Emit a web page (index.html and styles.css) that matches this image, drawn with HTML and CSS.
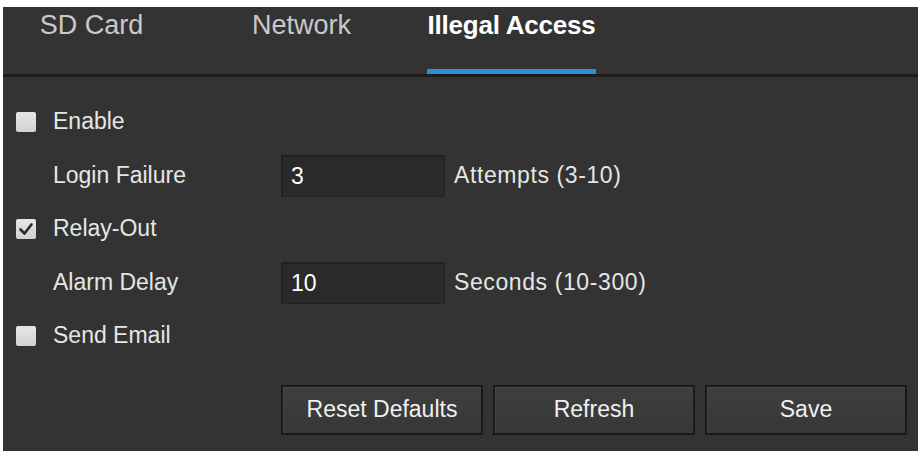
FILE: index.html
```html
<!DOCTYPE html>
<html>
<head>
<meta charset="utf-8">
<link rel="stylesheet" href="styles.css">
</head>
<body>
<div class="panel">
  <div class="tabs">
    <div class="tab"><span class="tab-label">SD Card</span></div>
    <div class="tab"><span class="tab-label">Network</span></div>
    <div class="tab active"><span class="tab-label">Illegal Access</span></div>
  </div>
  <div class="content">
    <div class="row">
      <span class="check"></span>
      <span class="label">Enable</span>
    </div>
    <div class="row indent">
      <span class="label field-label">Login Failure</span>
      <div class="input">3</div>
      <span class="suffix">Attempts (3-10)</span>
    </div>
    <div class="row">
      <span class="check checked">
        <svg viewBox="0 0 20 20" width="20" height="20"><path d="M4.5 10.5 L8.5 14.5 L15.5 5.5" fill="none" stroke="#2b2b2b" stroke-width="2.6" stroke-linecap="round" stroke-linejoin="round"/></svg>
      </span>
      <span class="label">Relay-Out</span>
    </div>
    <div class="row indent">
      <span class="label field-label">Alarm Delay</span>
      <div class="input">10</div>
      <span class="suffix">Seconds (10-300)</span>
    </div>
    <div class="row">
      <span class="check"></span>
      <span class="label">Send Email</span>
    </div>
    <div class="actions">
      <button class="btn">Reset Defaults</button>
      <button class="btn">Refresh</button>
      <button class="btn">Save</button>
    </div>
  </div>
</div>
</body>
</html>
```
FILE: styles.css
```css
html, body {
  margin: 0;
  padding: 0;
  background: #ffffff;
}
body {
  width: 923px;
  height: 457px;
  overflow: hidden;
  font-family: "Liberation Sans", Arial, sans-serif;
}
.panel {
  margin: 7px 5px 0 3px;
  height: 444px;
  background: #333333;
  display: flex;
  flex-direction: column;
}
.tabs {
  display: flex;
  gap: 33px;
  height: 67px;
  border-bottom: 3px solid #1d1d1d;
}
.tab {
  width: 177px;
  display: flex;
  justify-content: center;
}
.tab-label {
  box-sizing: border-box;
  height: 67px;
  padding-top: 3px;
  font-size: 27px;
  line-height: 30px;
  color: #c9c9c9;
}
.tab.active .tab-label {
  color: #ffffff;
  font-weight: bold;
  font-size: 26px;
  letter-spacing: -0.2px;
  border-bottom: 5px solid #2b8fd8;
}
.content {
  padding-top: 18px;
  display: flex;
  flex-direction: column;
}
.row {
  height: 53.5px;
  display: flex;
  align-items: center;
  padding-left: 13px;
}
.row.indent {
  padding-left: 50px;
}
.check {
  width: 20px;
  height: 20px;
  border-radius: 2px;
  background: linear-gradient(#e6e6e6, #d2d2d2);
  margin-right: 17px;
  display: flex;
}
.label {
  font-size: 23px;
  color: #e6e6e6;
}
.field-label {
  width: 228px;
}
.input {
  box-sizing: border-box;
  width: 164px;
  height: 42px;
  background: #2a2a2a;
  border: 1px solid #222222;
  box-shadow: inset 1px 1px 0 #1f1f1f;
  padding-left: 9px;
  display: flex;
  align-items: center;
  font-size: 23px;
  color: #ffffff;
  margin-top: 2px;
}
.suffix {
  margin-left: 9px;
  font-size: 23px;
  color: #e6e6e6;
  letter-spacing: 0.6px;
}
.actions {
  margin-top: 22px;
  padding-left: 278px;
  display: flex;
  gap: 10px;
}
.btn {
  box-sizing: border-box;
  width: 202px;
  height: 50px;
  background: linear-gradient(#3e3e3e, #373737);
  border: 2px solid #1b1b1b;
  box-shadow: inset 0 1px 0 #4a4a4a, inset 1px 0 0 #444444;
  border-radius: 1px;
  font-family: "Liberation Sans", Arial, sans-serif;
  font-size: 23px;
  color: #f0f0f0;
  padding: 0;
}
```
